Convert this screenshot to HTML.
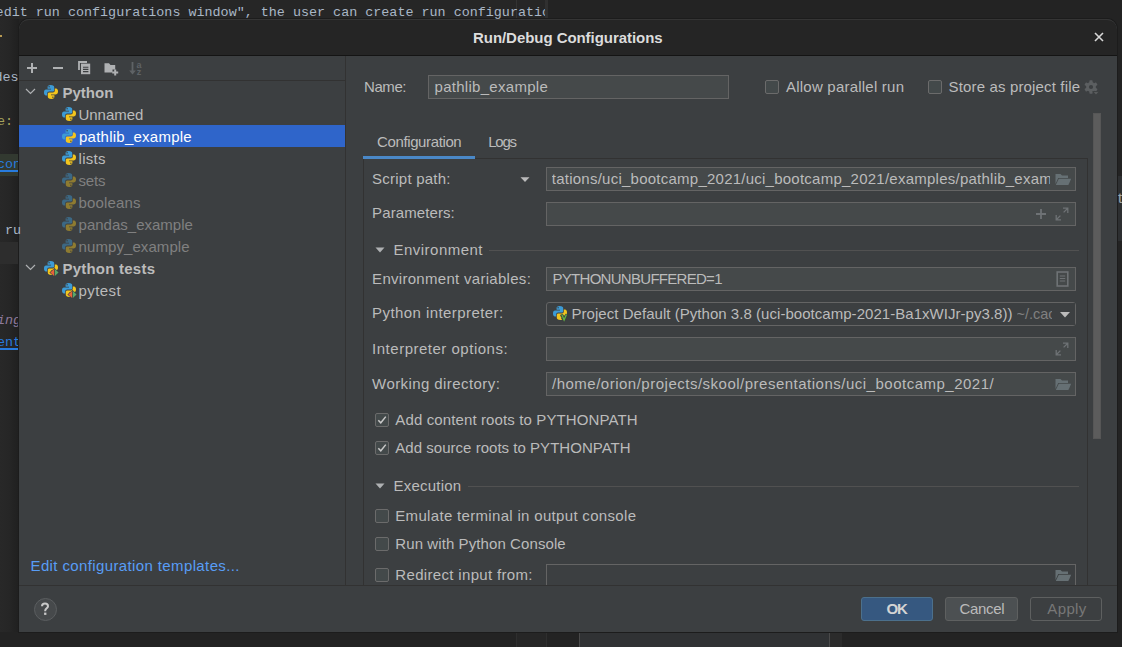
<!DOCTYPE html>
<html><head><meta charset="utf-8">
<style>
html,body{margin:0;padding:0;width:1122px;height:647px;overflow:hidden;background:#232323;}
body{position:relative;font-family:"Liberation Sans",sans-serif;}
.a{position:absolute;box-sizing:border-box;}
.t{position:absolute;white-space:pre;z-index:3;}
.ov{z-index:4;}
svg{position:absolute;overflow:visible;}
</style></head><body>
<!-- editor background -->
<div class="a" style="left:0;top:0;width:545px;height:19px;background:#262626"></div>
<div class="a" style="left:545px;top:0;width:3px;height:19px;background:#303030"></div>
<div class="a" style="left:516px;top:0;width:1px;height:19px;background:#333"></div>
<div class="a" style="left:0;top:19px;width:19px;height:613px;background:linear-gradient(to right,#282828 0,#262626 9px,#202020 18px)"></div>
<div class="a" style="left:0;top:154px;width:19px;height:22px;background:#323930"></div>
<div class="a" style="left:0;top:242px;width:19px;height:22px;background:#2d2d2d"></div>
<div class="a" style="left:1117px;top:176px;width:5px;height:65px;background:#2d2f31"></div>
<div class="a" style="left:0;top:35px;width:2px;height:2px;background:#b89a52"></div>
<!-- bottom strip below dialog -->
<div class="a" style="left:516px;top:632px;width:1px;height:15px;background:#2e2e2e"></div>
<div class="a" style="left:517px;top:632px;width:29px;height:15px;background:#262626"></div>
<div class="a" style="left:546px;top:632px;width:1px;height:15px;background:#2e2e2e"></div>
<div class="a" style="left:579px;top:632px;width:1px;height:15px;background:#4a4a4a"></div>
<div class="a" style="left:580px;top:632px;width:249px;height:15px;background:#303234"></div>
<div class="a" style="left:829px;top:632px;width:1px;height:15px;background:#4a4a4a"></div>
<div class="a" style="left:830px;top:632px;width:12px;height:15px;background:#2b2b2b"></div>

<!-- dialog -->
<div class="a" style="left:19px;top:19px;width:1098px;height:613px;background:#3c3f41;border-radius:10px 10px 0 0;overflow:hidden;box-shadow:0 0 0 1px #1c1c1c;">
  <div class="a" style="left:0;top:0;width:1098px;height:36px;background:#252525;border-top:1px solid #353535;border-radius:10px 10px 0 0"></div>
  <div class="a" style="left:0;top:36px;width:1098px;height:1px;background:#141414"></div>
</div>
<!-- left panel separators -->
<div class="a" style="left:19px;top:80px;width:326px;height:1px;background:#323232"></div>
<div class="a" style="left:345px;top:56px;width:1px;height:529px;background:#323232"></div>
<div class="a" style="left:19px;top:585px;width:1098px;height:1px;background:#323232"></div>
<!-- selection -->
<div class="a" style="left:19px;top:125px;width:326px;height:22px;background:#2f65ca"></div>

<!-- close X -->
<svg style="left:1094px;top:32px" width="10" height="10" viewBox="0 0 10 10"><path d="M1 1L9 9M9 1L1 9" stroke="#d8d8d8" stroke-width="1.6"/></svg>

<!-- toolbar icons -->
<svg style="left:26px;top:62px" width="12" height="12" viewBox="0 0 12 12"><path d="M1 6H11M6 1V11" stroke="#afb1b3" stroke-width="2"/></svg>
<svg style="left:52px;top:62px" width="12" height="12" viewBox="0 0 12 12"><path d="M1 6H11" stroke="#afb1b3" stroke-width="2"/></svg>
<svg style="left:78px;top:61px" width="13" height="14" viewBox="0 0 13 14"><path d="M1 9V1H9" stroke="#afb1b3" stroke-width="1.8" fill="none"/><rect x="3" y="2.6" width="9.2" height="10.6" fill="#afb1b3"/><path d="M5 6.2H10.4M5 8.4H10.4M5 10.6H10.4" stroke="#3c3f41" stroke-width="1.1"/></svg>
<svg style="left:104px;top:62px" width="15" height="14" viewBox="0 0 15 14"><path d="M0.5 1.3H5L6.5 3H11.2V7.5H8.5V10.5H0.5Z" fill="#afb1b3"/><path d="M11.2 7.5V13.5M8.2 10.5H14.2" stroke="#afb1b3" stroke-width="2"/></svg>
<svg style="left:129px;top:61px" width="14" height="15" viewBox="0 0 14 15"><path d="M3.5 1V11" stroke="#5f6366" stroke-width="1.8" fill="none"/><path d="M0.2 9.6L3.5 13.6L6.8 9.6Z" fill="#5f6366"/><text x="7.6" y="6.6" font-family="Liberation Sans" font-size="9" font-weight="700" fill="#5f6366">a</text><text x="7.8" y="14.2" font-family="Liberation Sans" font-size="9" font-weight="700" fill="#5f6366">z</text></svg>

<!-- tree chevrons -->
<svg style="left:25px;top:88px" width="11" height="7" viewBox="0 0 11 7"><path d="M1 1L5.5 5.5L10 1" stroke="#afb1b3" stroke-width="1.2" fill="none"/></svg>
<svg style="left:25px;top:264px" width="11" height="7" viewBox="0 0 11 7"><path d="M1 1L5.5 5.5L10 1" stroke="#afb1b3" stroke-width="1.2" fill="none"/></svg>

<!-- python icons -->
<svg width="0" height="0" style="position:absolute"><defs>
<g id="py">
<path d="M7.6 1C5.2 1 4.6 2 4.6 3.2V4.8H8V5.6H3.1C1.6 5.6 1 6.8 1 8.4C1 10 1.6 11.4 3 11.4H4.2V9.6C4.2 8.5 5 7.6 6.2 7.6H9.6C10.6 7.6 11.2 6.9 11.2 5.9V3.2C11.2 2 10.2 1 7.6 1Z" fill="#3d9bd5"/>
<path d="M7.6 1C5.2 1 4.6 2 4.6 3.2V4.8H8V5.6H3.1C1.6 5.6 1 6.8 1 8.4C1 10 1.6 11.4 3 11.4H4.2V9.6C4.2 8.5 5 7.6 6.2 7.6H9.6C10.6 7.6 11.2 6.9 11.2 5.9V3.2C11.2 2 10.2 1 7.6 1Z" fill="#f2c51e" transform="rotate(180 8 8)"/>
<circle cx="6.1" cy="2.7" r="0.7" fill="#3c3f41"/>
<circle cx="9.9" cy="13.3" r="0.7" fill="#3c3f41"/>
</g>
<g id="pyt">
<use href="#py"/>
<path d="M11.6 7.9L6.4 12.5L11.6 17ZM11.5 7.9L16.3 12.5L11.5 17Z" fill="#3c3f41"/>
<path d="M11.1 9L7.3 12.5L11.1 16Z" fill="#e8633a"/>
<path d="M11.9 9L15.5 12.5L11.9 16Z" fill="#59a869"/>
</g>
</defs></svg>
<svg style="left:43px;top:84px" width="16" height="16" viewBox="0 0 16 16"><use href="#py"/></svg>
<svg style="left:61px;top:106px" width="16" height="16" viewBox="0 0 16 16"><use href="#py"/></svg>
<svg style="left:61px;top:128px" width="16" height="16" viewBox="0 0 16 16"><use href="#py"/></svg>
<svg style="left:61px;top:150px" width="16" height="16" viewBox="0 0 16 16"><use href="#py"/></svg>
<svg style="left:61px;top:172px;opacity:.45" width="16" height="16" viewBox="0 0 16 16"><use href="#py"/></svg>
<svg style="left:61px;top:194px;opacity:.45" width="16" height="16" viewBox="0 0 16 16"><use href="#py"/></svg>
<svg style="left:61px;top:216px;opacity:.45" width="16" height="16" viewBox="0 0 16 16"><use href="#py"/></svg>
<svg style="left:61px;top:238px;opacity:.45" width="16" height="16" viewBox="0 0 16 16"><use href="#py"/></svg>
<svg style="left:43px;top:260px" width="16" height="16" viewBox="0 0 16 16"><use href="#pyt"/></svg>
<svg style="left:61px;top:282px" width="16" height="16" viewBox="0 0 16 16"><use href="#pyt"/></svg>

<!-- help button -->
<div class="a" style="left:34px;top:598px;width:23px;height:23px;border-radius:50%;background:#46494b;border:1px solid #5b5e60"></div>
<svg style="left:39px;top:602px" width="12" height="15" viewBox="0 0 12 15"><path d="M3 4.3C3 2.6 4.3 1.6 6 1.6C7.7 1.6 9 2.6 9 4.2C9 6.3 6.2 6.4 6.2 8.8V9.3" stroke="#c8c8c8" stroke-width="2" fill="none"/><rect x="5.1" y="10.6" width="2.3" height="2.3" fill="#c8c8c8"/></svg>

<!-- right panel: name field -->
<div class="a" style="left:428px;top:75px;width:301px;height:24px;background:#45494a;border:1px solid #646464"></div>
<!-- checkboxes -->
<div class="a" style="left:765px;top:80px;width:14px;height:14px;background:#43494a;border:1px solid #6b6b6b;border-radius:2px"></div>
<div class="a" style="left:928px;top:80px;width:14px;height:14px;background:#43494a;border:1px solid #6b6b6b;border-radius:2px"></div>
<!-- gear -->
<svg style="left:1083px;top:79px" width="17" height="17" viewBox="0 0 17 17"><g fill="#5c5f61"><circle cx="8" cy="8" r="4.9"/><g id="tooth"><rect x="6.4" y="1.3" width="3.2" height="3" rx="0.6"/><rect x="6.4" y="11.7" width="3.2" height="3" rx="0.6"/></g><use href="#tooth" transform="rotate(60 8 8)"/><use href="#tooth" transform="rotate(120 8 8)"/></g><circle cx="8" cy="8" r="2.1" fill="#3c3f41"/><path d="M9.8 12.6H16.2L13 15.8Z" fill="#5c5f61" stroke="#3c3f41" stroke-width="0.9"/></svg>
<!-- scrollbar -->
<div class="a" style="left:1093px;top:113px;width:8px;height:326px;background:#5c5c5c;border:1px solid #565656"></div>

<!-- tabs -->
<div class="a" style="left:363px;top:156px;width:112px;height:3px;background:#4a88c7;z-index:2"></div>
<!-- content panel -->
<div class="a" style="left:363px;top:158px;width:725px;height:427px;border:1px solid #323232;border-bottom:none"></div>

<!-- script path -->
<svg style="left:519px;top:176px" width="12" height="7" viewBox="0 0 12 7"><path d="M1.5 1.2H10.5L6 6Z" fill="#bbbbbb"/></svg>
<div class="a" style="left:546px;top:167px;width:530px;height:24px;background:#45494a;border:1px solid #646464"></div>
<div class="a ov" style="left:1050px;top:168px;width:25px;height:22px;background:#45494a"></div>
<svg class="ov" style="left:1055px;top:173px;z-index:5" width="17" height="13" viewBox="0 0 17 13"><path d="M0.5 1H5.5L7 2.5H13V5H3.2L0.5 11Z" fill="#667074"/><path d="M3.8 5.8H16.2L13.4 12H0.8Z" fill="#667074"/></svg>
<!-- parameters -->
<div class="a" style="left:546px;top:202px;width:530px;height:24px;background:#45494a;border:1px solid #646464"></div>
<svg style="left:1035px;top:208px" width="12" height="12" viewBox="0 0 12 12"><path d="M1 6H11M6 1V11" stroke="#6e7275" stroke-width="1.8"/></svg>
<svg style="left:1055px;top:207px" width="14" height="14" viewBox="0 0 14 14"><path d="M8 1.2H12.8V6M12.8 1.2L8.6 5.4M6 12.8H1.2V8M1.2 12.8L5.4 8.6" stroke="#6e7275" stroke-width="1.3" fill="none"/></svg>
<!-- environment section -->
<svg style="left:375px;top:247px" width="10" height="6" viewBox="0 0 10 6"><path d="M0.5 0.5H9.5L5 5.5Z" fill="#afb1b3"/></svg>
<div class="a" style="left:489px;top:250px;width:590px;height:1px;background:#515151"></div>
<!-- env vars -->
<div class="a" style="left:546px;top:267px;width:530px;height:24px;background:#45494a;border:1px solid #646464"></div>
<svg style="left:1056px;top:271px" width="13" height="16" viewBox="0 0 13 16"><rect x="1.2" y="1" width="10.6" height="14" fill="none" stroke="#6e7275" stroke-width="1.6"/><path d="M3.8 5H9.2M3.8 7.5H9.2M3.8 10H9.2" stroke="#6e7275" stroke-width="1.2"/></svg>
<!-- interpreter combo -->
<div class="a" style="left:546px;top:302px;width:530px;height:24px;background:#3c3f41;border:1px solid #646464;border-radius:3px"></div>
<svg style="left:552px;top:305px" width="16" height="16" viewBox="0 0 16 16"><use href="#py"/><path d="M9.6 9.2L12.1 15.4L14.8 9.2" stroke="#3c3f41" stroke-width="2.8" fill="none"/><path d="M9.8 9.4L12.1 15L14.4 9.4" stroke="#62b543" stroke-width="1.3" fill="none"/></svg>
<div class="a ov" style="left:1052px;top:303px;width:23px;height:22px;background:#3c3f41"></div>
<svg class="ov" style="left:1059px;top:311px;z-index:5" width="12" height="8" viewBox="0 0 12 8"><path d="M1 1H11L6 6.5Z" fill="#bbbbbb"/></svg>
<!-- interp options -->
<div class="a" style="left:546px;top:337px;width:530px;height:24px;background:#45494a;border:1px solid #646464"></div>
<svg style="left:1055px;top:342px" width="14" height="14" viewBox="0 0 14 14"><path d="M8 1.2H12.8V6M12.8 1.2L8.6 5.4M6 12.8H1.2V8M1.2 12.8L5.4 8.6" stroke="#6e7275" stroke-width="1.3" fill="none"/></svg>
<!-- working dir -->
<div class="a" style="left:546px;top:372px;width:530px;height:24px;background:#45494a;border:1px solid #646464"></div>
<svg style="left:1055px;top:378px" width="17" height="13" viewBox="0 0 17 13"><path d="M0.5 1H5.5L7 2.5H13V5H3.2L0.5 11Z" fill="#667074"/><path d="M3.8 5.8H16.2L13.4 12H0.8Z" fill="#667074"/></svg>
<!-- checkboxes checked -->
<div class="a" style="left:375px;top:413px;width:14px;height:14px;background:#43494a;border:1px solid #6b6b6b;border-radius:2px"></div>
<svg style="left:375px;top:413px" width="14" height="14" viewBox="0 0 14 14"><path d="M3.3 7.2L5.8 9.8L10.8 3.6" stroke="#c8c8c8" stroke-width="1.5" fill="none"/></svg>
<div class="a" style="left:375px;top:441px;width:14px;height:14px;background:#43494a;border:1px solid #6b6b6b;border-radius:2px"></div>
<svg style="left:375px;top:441px" width="14" height="14" viewBox="0 0 14 14"><path d="M3.3 7.2L5.8 9.8L10.8 3.6" stroke="#c8c8c8" stroke-width="1.5" fill="none"/></svg>
<!-- execution section -->
<svg style="left:375px;top:483px" width="10" height="6" viewBox="0 0 10 6"><path d="M0.5 0.5H9.5L5 5.5Z" fill="#afb1b3"/></svg>
<div class="a" style="left:468px;top:486px;width:611px;height:1px;background:#515151"></div>
<div class="a" style="left:375px;top:509px;width:14px;height:14px;background:#43494a;border:1px solid #6b6b6b;border-radius:2px"></div>
<div class="a" style="left:375px;top:537px;width:14px;height:14px;background:#43494a;border:1px solid #6b6b6b;border-radius:2px"></div>
<div class="a" style="left:375px;top:568px;width:14px;height:14px;background:#43494a;border:1px solid #6b6b6b;border-radius:2px"></div>
<!-- redirect field (clipped) -->
<div class="a" style="left:546px;top:564px;width:530px;height:21px;overflow:hidden"><div class="a" style="left:0;top:0;width:530px;height:24px;background:#3c3f41;border:1px solid #646464"></div></div>
<svg style="left:1055px;top:569px" width="17" height="13" viewBox="0 0 17 13"><path d="M0.5 1H5.5L7 2.5H13V5H3.2L0.5 11Z" fill="#667074"/><path d="M3.8 5.8H16.2L13.4 12H0.8Z" fill="#667074"/></svg>

<!-- buttons -->
<div class="a" style="left:861px;top:597px;width:72px;height:24px;background:#365880;border:1px solid #4c708c;border-radius:3px"></div>
<div class="a" style="left:945px;top:597px;width:73px;height:24px;background:#4c5052;border:1px solid #5e6060;border-radius:3px"></div>
<div class="a" style="left:1030px;top:597px;width:72px;height:24px;background:#3c3f41;border:1px solid #5e6060;border-radius:3px"></div>

<div class="t" style="left:-4.4px;top:5.4px;font-family:'Liberation Mono';font-size:13.4px;line-height:16px;font-weight:400;color:#a9b7c6;width:549.4px;overflow:hidden;">edit run configurations window&quot;, the user can create run configuration</div>
<div class="t" style="left:-5.5px;top:70.4px;font-family:'Liberation Mono';font-size:13.4px;line-height:16px;font-weight:400;color:#a9b7c6;width:23.5px;overflow:hidden;">des</div>
<div class="t" style="left:-3.0px;top:114.4px;font-family:'Liberation Mono';font-size:13.4px;line-height:16px;font-weight:400;color:#a5a15c;width:21.0px;overflow:hidden;">e:</div>
<div class="t" style="left:-3.0px;top:157.4px;font-family:'Liberation Mono';font-size:13.4px;line-height:16px;font-weight:400;color:#287bde;text-decoration:underline;text-decoration-thickness:1.5px;text-underline-offset:2px;width:21.0px;overflow:hidden;">con</div>
<div class="t" style="left:5.0px;top:223.4px;font-family:'Liberation Mono';font-size:13.4px;line-height:16px;font-weight:400;color:#a9b7c6;">ru</div>
<div class="t" style="left:-3.0px;top:313.4px;font-family:'Liberation Mono';font-size:13.4px;line-height:16px;font-weight:400;color:#8f7a9b;font-style:italic;width:21.0px;overflow:hidden;">ing</div>
<div class="t" style="left:-3.0px;top:335.4px;font-family:'Liberation Mono';font-size:13.4px;line-height:16px;font-weight:400;color:#287bde;text-decoration:underline;text-decoration-thickness:1.5px;text-underline-offset:2px;width:21.0px;overflow:hidden;">ent</div>
<div class="t" style="left:1118.0px;top:188.8px;font-family:'Liberation Sans';font-size:15px;line-height:18px;font-weight:400;color:#9ea6ae;">t</div>
<div class="t" style="left:473.0px;top:28.8px;font-family:'Liberation Sans';font-size:15px;line-height:18px;font-weight:700;color:#dcdcdc;letter-spacing:-0.053px;">Run/Debug Configurations</div>
<div class="t" style="left:62.4px;top:83.8px;font-family:'Liberation Sans';font-size:15px;line-height:18px;font-weight:700;color:#bbbbbb;letter-spacing:0.031px;">Python</div>
<div class="t" style="left:78.5px;top:105.8px;font-family:'Liberation Sans';font-size:15px;line-height:18px;font-weight:400;color:#bbbbbb;letter-spacing:-0.041px;">Unnamed</div>
<div class="t" style="left:79.0px;top:127.8px;font-family:'Liberation Sans';font-size:15px;line-height:18px;font-weight:400;color:#ffffff;letter-spacing:0.246px;">pathlib_example</div>
<div class="t" style="left:78.6px;top:149.8px;font-family:'Liberation Sans';font-size:15px;line-height:18px;font-weight:400;color:#bbbbbb;letter-spacing:0.239px;">lists</div>
<div class="t" style="left:78.6px;top:171.8px;font-family:'Liberation Sans';font-size:15px;line-height:18px;font-weight:400;color:#808080;letter-spacing:-0.239px;">sets</div>
<div class="t" style="left:78.6px;top:193.8px;font-family:'Liberation Sans';font-size:15px;line-height:18px;font-weight:400;color:#808080;letter-spacing:0.130px;">booleans</div>
<div class="t" style="left:78.6px;top:215.8px;font-family:'Liberation Sans';font-size:15px;line-height:18px;font-weight:400;color:#808080;">pandas_example</div>
<div class="t" style="left:78.6px;top:237.8px;font-family:'Liberation Sans';font-size:15px;line-height:18px;font-weight:400;color:#808080;letter-spacing:0.078px;">numpy_example</div>
<div class="t" style="left:62.4px;top:259.8px;font-family:'Liberation Sans';font-size:15px;line-height:18px;font-weight:700;color:#bbbbbb;letter-spacing:0.235px;">Python tests</div>
<div class="t" style="left:78.6px;top:281.8px;font-family:'Liberation Sans';font-size:15px;line-height:18px;font-weight:400;color:#bbbbbb;letter-spacing:0.394px;">pytest</div>
<div class="t" style="left:30.5px;top:556.8px;font-family:'Liberation Sans';font-size:15px;line-height:18px;font-weight:400;color:#589df6;letter-spacing:0.380px;">Edit configuration templates...</div>
<div class="t" style="left:364.0px;top:77.8px;font-family:'Liberation Sans';font-size:15px;line-height:18px;font-weight:400;color:#bbbbbb;letter-spacing:-0.422px;">Name:</div>
<div class="t" style="left:434.5px;top:77.8px;font-family:'Liberation Sans';font-size:15px;line-height:18px;font-weight:400;color:#bbbbbb;letter-spacing:0.289px;">pathlib_example</div>
<div class="t" style="left:786.0px;top:77.8px;font-family:'Liberation Sans';font-size:15px;line-height:18px;font-weight:400;color:#bbbbbb;letter-spacing:0.222px;">Allow parallel run</div>
<div class="t" style="left:948.5px;top:77.8px;font-family:'Liberation Sans';font-size:15px;line-height:18px;font-weight:400;color:#bbbbbb;letter-spacing:0.155px;">Store as project file</div>
<div class="t" style="left:377.0px;top:132.8px;font-family:'Liberation Sans';font-size:15px;line-height:18px;font-weight:400;color:#bbbbbb;letter-spacing:-0.378px;">Configuration</div>
<div class="t" style="left:488.3px;top:132.8px;font-family:'Liberation Sans';font-size:15px;line-height:18px;font-weight:400;color:#bbbbbb;letter-spacing:-1.277px;">Logs</div>
<div class="t" style="left:372.1px;top:169.8px;font-family:'Liberation Sans';font-size:15px;line-height:18px;font-weight:400;color:#bbbbbb;letter-spacing:0.230px;">Script path:</div>
<div class="t" style="left:551.8px;top:169.8px;font-family:'Liberation Sans';font-size:15px;line-height:18px;font-weight:400;color:#bbbbbb;letter-spacing:0.242px;width:498.2px;overflow:hidden;">tations/uci_bootcamp_2021/uci_bootcamp_2021/examples/pathlib_exam</div>
<div class="t" style="left:1016.5px;top:305.5px;font-family:'Liberation Sans';font-size:14.5px;line-height:17px;font-weight:400;color:#808080;width:35.5px;overflow:hidden;">~/.cache/pypoetry</div>
<div class="t" style="left:372.1px;top:203.8px;font-family:'Liberation Sans';font-size:15px;line-height:18px;font-weight:400;color:#bbbbbb;letter-spacing:0.100px;">Parameters:</div>
<div class="t" style="left:393.5px;top:240.8px;font-family:'Liberation Sans';font-size:15px;line-height:18px;font-weight:400;color:#bbbbbb;letter-spacing:0.478px;">Environment</div>
<div class="t" style="left:372.1px;top:269.8px;font-family:'Liberation Sans';font-size:15px;line-height:18px;font-weight:400;color:#bbbbbb;letter-spacing:0.292px;">Environment variables:</div>
<div class="t" style="left:552.5px;top:269.8px;font-family:'Liberation Sans';font-size:15px;line-height:18px;font-weight:400;color:#bbbbbb;letter-spacing:-0.712px;">PYTHONUNBUFFERED=1</div>
<div class="t" style="left:372.1px;top:303.8px;font-family:'Liberation Sans';font-size:15px;line-height:18px;font-weight:400;color:#bbbbbb;letter-spacing:0.422px;">Python interpreter:</div>
<div class="t" style="left:571.5px;top:304.8px;font-family:'Liberation Sans';font-size:15px;line-height:18px;font-weight:400;color:#bbbbbb;letter-spacing:0.040px;">Project Default (Python 3.8 (uci-bootcamp-2021-Ba1xWIJr-py3.8))</div>
<div class="t" style="left:372.1px;top:339.8px;font-family:'Liberation Sans';font-size:15px;line-height:18px;font-weight:400;color:#bbbbbb;letter-spacing:0.505px;">Interpreter options:</div>
<div class="t" style="left:372.1px;top:374.8px;font-family:'Liberation Sans';font-size:15px;line-height:18px;font-weight:400;color:#bbbbbb;letter-spacing:0.418px;">Working directory:</div>
<div class="t" style="left:552.0px;top:374.8px;font-family:'Liberation Sans';font-size:15px;line-height:18px;font-weight:400;color:#bbbbbb;letter-spacing:0.499px;">/home/orion/projects/skool/presentations/uci_bootcamp_2021/</div>
<div class="t" style="left:395.3px;top:410.8px;font-family:'Liberation Sans';font-size:15px;line-height:18px;font-weight:400;color:#bbbbbb;letter-spacing:0.123px;">Add content roots to PYTHONPATH</div>
<div class="t" style="left:395.3px;top:438.8px;font-family:'Liberation Sans';font-size:15px;line-height:18px;font-weight:400;color:#bbbbbb;letter-spacing:0.027px;">Add source roots to PYTHONPATH</div>
<div class="t" style="left:393.5px;top:476.8px;font-family:'Liberation Sans';font-size:15px;line-height:18px;font-weight:400;color:#bbbbbb;letter-spacing:0.228px;">Execution</div>
<div class="t" style="left:395.3px;top:506.8px;font-family:'Liberation Sans';font-size:15px;line-height:18px;font-weight:400;color:#bbbbbb;letter-spacing:0.320px;">Emulate terminal in output console</div>
<div class="t" style="left:395.3px;top:534.8px;font-family:'Liberation Sans';font-size:15px;line-height:18px;font-weight:400;color:#bbbbbb;letter-spacing:0.089px;">Run with Python Console</div>
<div class="t" style="left:395.3px;top:565.8px;font-family:'Liberation Sans';font-size:15px;line-height:18px;font-weight:400;color:#bbbbbb;letter-spacing:0.332px;">Redirect input from:</div>
<div class="t" style="left:886.5px;top:599.8px;font-family:'Liberation Sans';font-size:15px;line-height:18px;font-weight:700;color:#d4d4d4;letter-spacing:-1.100px;">OK</div>
<div class="t" style="left:959.4px;top:599.8px;font-family:'Liberation Sans';font-size:15px;line-height:18px;font-weight:400;color:#bbbbbb;letter-spacing:-0.301px;">Cancel</div>
<div class="t" style="left:1047.3px;top:599.8px;font-family:'Liberation Sans';font-size:15px;line-height:18px;font-weight:400;color:#777777;letter-spacing:0.367px;">Apply</div>
</body></html>
